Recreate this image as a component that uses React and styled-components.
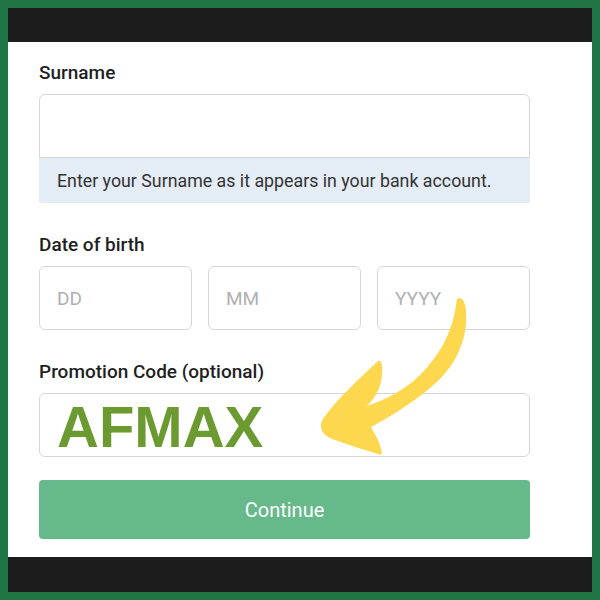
import React from "react";
import styled, { createGlobalStyle } from "styled-components";

const GlobalStyle = createGlobalStyle`
  body {
    margin: 0;
    font-family: Roboto, "Liberation Sans", sans-serif;
  }
`;

const Frame = styled.div`
  position: relative;
  width: 600px;
  height: 600px;
  box-sizing: border-box;
  padding: 8px;
  background-color: #1e7445;
  display: flex;
  flex-direction: column;
`;

const Bar = styled.div`
  height: ${(p) => p.h}px;
  background-color: #1c1c1c;
  flex-shrink: 0;
`;

const Card = styled.div`
  flex: 1;
  background-color: white;
  padding: 21px 62px 0 31px;
  display: flex;
  flex-direction: column;
`;

const Field = styled.div`
  display: flex;
  flex-direction: column;
  margin-bottom: ${(p) => p.gap || 0}px;
`;

const Label = styled.div`
  font-size: 19px;
  line-height: 20px;
  font-weight: 500;
  color: #1f1f1f;
  margin-bottom: 11px;
`;

const Input = styled.div`
  box-sizing: border-box;
  height: 64px;
  border: 1.5px solid #d6d6d6;
  border-radius: 6px;
  display: flex;
  align-items: center;
  padding-left: 17px;
  flex: ${(p) => (p.grow ? 1 : "none")};
  border-bottom-left-radius: ${(p) => (p.attached ? 0 : 6)}px;
  border-bottom-right-radius: ${(p) => (p.attached ? 0 : 6)}px;
`;

const Helper = styled.div`
  height: 45px;
  background-color: #e4ecf6;
  display: flex;
  align-items: center;
  padding-left: 18px;
  font-size: 17.8px;
  color: #333;
`;

const DateRow = styled.div`
  display: flex;
  gap: 16px;
`;

const Placeholder = styled.span`
  font-size: 19px;
  color: #b0b0b0;
`;

const PromoText = styled.span`
  font-family: "Liberation Sans", Arial, sans-serif;
  font-weight: 700;
  font-size: 58px;
  line-height: 1;
  color: #6a9a30;
  margin-top: 4px;
`;

const ContinueButton = styled.button`
  height: 59px;
  border: none;
  border-radius: 4px;
  background-color: #66b98a;
  color: white;
  font-family: Roboto, "Liberation Sans", sans-serif;
  font-size: 20px;
  font-weight: 400;
`;

const Arrow = styled.svg`
  position: absolute;
  left: 0;
  top: 0;
  pointer-events: none;
`;

export default function App() {
  return (
    <>
      <GlobalStyle />
      <Frame>
        <Bar h={34} />
        <Card>
          <Field gap={32}>
            <Label>Surname</Label>
            <Input attached />
            <Helper>Enter your Surname as it appears in your bank account.</Helper>
          </Field>
          <Field gap={32}>
            <Label>Date of birth</Label>
            <DateRow>
              <Input grow>
                <Placeholder>DD</Placeholder>
              </Input>
              <Input grow>
                <Placeholder>MM</Placeholder>
              </Input>
              <Input grow>
                <Placeholder>YYYY</Placeholder>
              </Input>
            </DateRow>
          </Field>
          <Field gap={23}>
            <Label>Promotion Code (optional)</Label>
            <Input>
              <PromoText>AFMAX</PromoText>
            </Input>
          </Field>
          <ContinueButton>Continue</ContinueButton>
        </Card>
        <Bar h={35} />
        <Arrow width="600" height="600" viewBox="0 0 600 600">
          <path
            fill="#fdd84e"
            d="M 457 299
               C 460 296, 466 300, 466 312
               C 468 335, 458 362, 438 381
               C 420 398, 395 414, 371 427
               C 374 433, 379 440, 380 446
               C 382 450, 382 453, 381 455
               C 365 450, 345 444, 330 438
               C 321 434, 319 426, 323 419
               C 336 400, 360 378, 377 362
               C 381 358, 383 365, 382 375
               C 381 385, 378 395, 367 406
               C 385 400, 405 390, 420 375
               C 437 358, 452 335, 456 305
               Z"
          />
        </Arrow>
      </Frame>
    </>
  );
}
